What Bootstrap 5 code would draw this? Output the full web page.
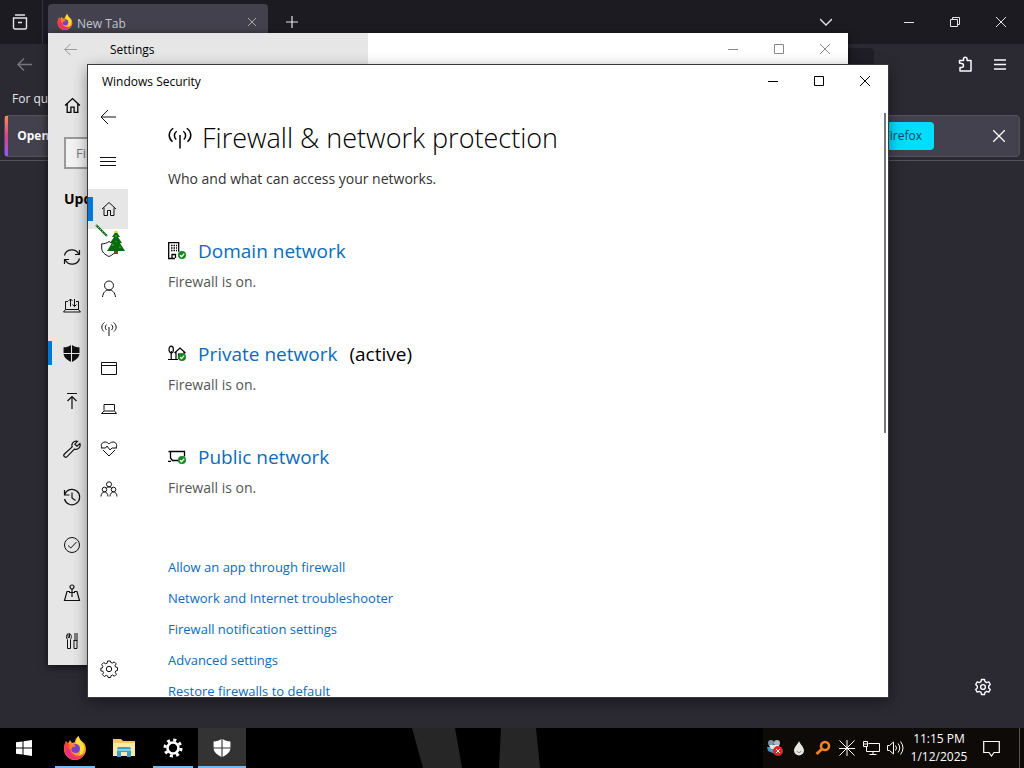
<!DOCTYPE html>
<html lang="en">
<head>
<meta charset="utf-8">
<meta name="viewport" content="width=device-width, initial-scale=1">
<title>Windows Security</title>
<link href="https://cdn.jsdelivr.net/npm/bootstrap@5.3.0/dist/css/bootstrap.min.css" rel="stylesheet">
<style>
:root{--ui:"Open Sans","Noto Sans",sans-serif;--accent:#0a6cbb;--bar:#0078d7}
body{font-family:var(--ui);font-size:12px;line-height:16px;background:#000;overflow:hidden}
svg{display:block;fill:none;stroke:currentColor;flex:none}
button{color:inherit;font:inherit}
.bare{border:0;background:none;padding:0;display:flex;align-items:center;justify-content:center;flex:none}
.cap{width:46px;height:32px}
.sq40{width:40px;height:40px}
.dim{color:#888}
/* browser */
.fx{background:#2b2a33;color:#fbfbfe}
.fx-tabs{height:44px;background:#1c1b22}
.fx-tabs,.fx-marks{color:#e4e4ea}
.fx-view{width:40px}
.fx-sep{width:1px;height:44px;background:#34333d;margin-left:2px}
.fx-tab{width:220px;margin:4px 0 0 5px;background:#42414d;border-radius:4px 4px 0 0;padding:0 12px 4px 9px;color:#c4c4cc}
.fx-tools{height:40px;padding:0 4px}
.fx-tools .off{color:#77767f}
.fx-url{height:32px;background:#1f1e26;border-radius:4px;margin:0 76px 0 60px}
.fx-ext{width:30px}
.fx-marks{height:30px;padding-left:12px}
.fx-note{height:42px;margin:1px 4px 3px;background:#42414d;border:1px solid #52515e;border-radius:4px}
.fx-strip{width:3px;background:linear-gradient(#ff8a50,#e0408c 50%,#9059ff)}
.fx-cta{background:#00ddff;color:#15465a;border:0;border-radius:4px;height:28px;padding:0 12px 0 40px;margin-right:45px}
.fx-page{border-top:1px solid #52515e}
/* windows */
.win{position:absolute}
.win-set{left:48px;top:33px;right:176px;bottom:103px;background:#fff;color:#000;box-shadow:0 2px 8px #000a}
.win-sec{left:88px;top:65px;right:136px;bottom:71px;background:#fff;color:#000;box-shadow:0 0 0 1px #3a3a3e,0 4px 14px #0007}
.set-head{height:32px}
.set-headl{width:320px;background:#e6e6e6}
.set-headl span{padding:2px 0 0 9px}
.set-pane{width:320px;background:#e6e6e6}
.set-home{height:48px;padding-left:16px;margin-top:16px;margin-bottom:8px}
.set-search{width:288px;height:32px;margin:0 16px;border:2px solid #999;background:#f2f2f2;padding:0 10px;font-size:13px;border-radius:0}
.set-search::placeholder{color:#777}
.set-title{font-size:14px;line-height:20px;font-weight:700;margin:20px 0 24px 16px}
.set-item{height:48px;padding-left:15px;display:flex;align-items:center;color:#111}
.mark-on{background:linear-gradient(var(--bar),var(--bar)) 0 50%/4px 24px no-repeat}
.sec-title{padding-left:14px;padding-top:2px}
.sec-nav{width:40px}
.sec-nav a,.sec-nav button{color:#111;width:40px;height:40px;display:flex;align-items:center;justify-content:center}
.sec-nav a{padding-left:2px}
.sec-nav .now{background:#e6e6e6;position:relative}
.now::before{content:"";position:absolute;left:0;top:8px;width:5px;height:24px;background:var(--bar)}
.sec-main{padding:23px 40px 0;overflow:hidden}
.sec-main h1{font-size:27px;line-height:36px;font-weight:300;margin:0;gap:10px}
.lede{font-size:14px;line-height:20px;color:#333;margin:13px 0 48px}
.net{margin-bottom:49px}
.net h2{font-size:19px;line-height:28px;font-weight:400;margin:0 0 7px}
.net p{font-size:14px;line-height:19px;color:#555;margin:0}
.sec-main a{color:var(--accent);text-decoration:none}
.links{font-size:13px;line-height:20px;padding-top:11px;gap:11px}
.thumb{width:2px;height:320px;background:#777;margin:16px 2px 0 0}
.pointer{position:absolute;left:94px;top:223px}
/* taskbar */
.tb{height:40px;background:#000;color:#fff}
.tb-start{width:48px;margin-right:3px}
.tb-apps{gap:1px}
.tb-app{width:48px}
.tb-app.run{position:relative}
.run::after{content:"";position:absolute;left:4px;right:4px;bottom:0;height:2px;background:#76b9ed}
.tb-app.top{background:#333}
.top::after{left:0;right:0}
.gap-l{flex:3}
.gap-r{flex:4}
.tb-tray{background:#0d0a08;padding-right:4px}
.tb-ic{width:24px}
.orange{color:#f5801f}
.tb-clock{width:64px;text-align:center;line-height:18px}
.tb-msg{width:40px}
.tb-end{border-right:1px solid #555;width:9px}
</style>
</head>
<body>
<svg width="0" height="0" class="position-absolute" aria-hidden="true">
<defs>
<symbol id="home" viewBox="0 0 16 16"><path d="M1 8 8 1.500 15 8M3 6.500V14.500h3.500V9.500h3v5H13V6.500"/></symbol>
<symbol id="cap-min" viewBox="0 0 10 10"><path d="M0 5.500h10"/></symbol>
<symbol id="cap-max" viewBox="0 0 10 10"><path d="M.5.5h9v9h-9z"/></symbol>
<symbol id="cross" viewBox="0 0 10 10"><path d="M0 0 10 10M10 0 0 10"/></symbol>
<symbol id="back" viewBox="0 0 16 16"><path d="M16 8H1M8 1 1 8l7 7"/></symbol>
<symbol id="waves" viewBox="0 0 16 16"><path d="M8 6v9M3.500 1.500C0 4 0 8 3 10.500M12.500 1.500c3.500 2.500 3.500 6.500.5 9M5.800 3.500c-2 1.500-2 4-.3 5.500M10.200 3.500c2 1.500 2 4 .3 5.500"/></symbol>
<symbol id="gear" viewBox="0 0 18 18"><path d="m7.600 1-.5 2.200-1.400.6-2-1.200-2 2L2.900 6.600l-.6 1.400L.8 8.300v2.500l2.200.5.600 1.300-1.200 2 1.900 1.900 2-1.200 1.300.6.5 1.600h2.500l.5-1.900 1.400-.6 2 1.200 1.900-1.900-1.200-2 .6-1.400 1.700-.5V7.600l-1.900-.5-.6-1.400 1.200-1.900-1.900-1.900-2 1.200-1.400-.6L10.300 1z"/><circle cx="9" cy="9" r="2.700"/></symbol>
<symbol id="tick" viewBox="0 0 8 8"><circle cx="4" cy="4" r="4" fill="#128a1c" stroke="none"/><path d="m2 4.200 1.500 1.500L6.200 2.700" stroke="#fff"/></symbol>
<symbol id="shield4" viewBox="0 0 16 16"><path fill="currentColor" stroke="none" d="M7.500 0v7.500H.5V2.200C3.500 2.200 5.500 1.500 7.500 0zM8.500 0v7.500h7V2.200c-3 0-5-.7-7-2.200zM.5 8.500h7V16C3.500 14 1 12 .5 8.500zM15.500 8.500h-7V16c4-2 6.500-4 7-7.500z"/></symbol>
<symbol id="firefox" viewBox="0 0 24 24"><g stroke="none"><path fill="#ff9a1f" d="M3 5l2 2.500 2-3.500 2 3 3-1c0-2 1-4 3.500-6l2 4.500C21 6 23 9 23 13c0 6-5 11-11 11S1 19 1 13c0-3 1-5 2-8z"/><path fill="#ffdf3b" d="M15.500 0c0 4 7.500 7 5.500 14-1 4-3 5-5 6 2-5 1-9-3-12-1-3 .5-6 2.500-8z"/><path fill="#f5404b" d="M1 12c0 7 5 12 11 12 5 0 8-3 10-7-5 5-13 3-14-3L6 8 3 6c-1 1-2 3-2 6z"/><path fill="#e82b80" d="M3 16c2 5 7 8 13 6-6 0-9-3-10-8L3 12z"/><circle cx="12.500" cy="12.500" r="4.500" fill="#7b3fd0"/><path fill="#ff7e28" d="M6 8c3-1 5 0 7 2l-4 1.500L8 14c-2-1-2-4-2-6z"/></g></symbol>
</defs>
</svg>

<div class="vh-100 d-flex flex-column position-relative">
 <main class="fx flex-grow-1 d-flex flex-column">
  <div class="fx-tabs d-flex">
   <button class="bare fx-view" aria-label="View"><svg width="16" height="16" viewBox="0 0 16 16" stroke-width="1.400"><path d="M3 1h10M1.500 4h13v9.500a1.500 1.500 0 0 1-1.500 1.500H3a1.500 1.500 0 0 1-1.500-1.500zM6 8.500h4"/></svg></button>
   <div class="fx-sep"></div>
   <div class="fx-tab d-flex align-items-center"><svg width="16" height="16"><use href="#firefox"/></svg><span class="flex-grow-1 ps-1 mt-1">New Tab</span><button class="bare" aria-label="Close tab"><svg width="8" height="8"><use href="#cross"/></svg></button></div>
   <button class="bare sq40 ms-1 mt-0" aria-label="New tab"><svg width="12" height="12" viewBox="0 0 12 12" class="mt-1"><path d="M6 0v12M0 6h12" stroke-width="1.200"/></svg></button>
   <button class="bare sq40 ms-auto me-4" aria-label="List tabs"><svg width="12" height="8" viewBox="0 0 12 8" stroke-width="1.300" class="mt-1"><path d="m0 1 6 6 6-6"/></svg></button>
   <div class="d-flex align-items-center ms-3"><button class="bare cap" aria-label="Minimize"><svg width="10" height="10"><use href="#cap-min"/></svg></button><button class="bare cap" aria-label="Restore"><svg width="10" height="10" viewBox="0 0 10 10"><path d="M.5 2.500h7v7h-7zM2.500 2.500v-2h7v7h-2"/></svg></button><button class="bare cap" aria-label="Close"><svg width="10" height="10"><use href="#cross"/></svg></button></div>
  </div>
  <div class="fx-tools d-flex align-items-center">
   <button class="bare sq40 off" aria-label="Back"><svg width="15" height="13" viewBox="0 0 15 13" stroke-width="1.400"><path d="M15 6.500H1M7 .5l-6 6 6 6"/></svg></button>
   <div class="fx-url flex-grow-1"></div>
   <button class="bare fx-ext" aria-label="Extensions"><svg width="16" height="16" viewBox="0 0 16 16" stroke-width="1.500" stroke-linejoin="round"><path d="M2.500 7V4.500h4V3a1.800 1.800 0 0 1 3.600 0v1.500H14V15H3v-3.500h1.500a1.900 1.900 0 0 0 0-4z"/></svg></button>
   <button class="bare sq40" aria-label="Menu"><svg width="12" height="11" viewBox="0 0 12 11" stroke-width="1.300"><path d="M0 1h12M0 5.500h12M0 10h12"/></svg></button>
  </div>
  <div class="fx-marks d-flex align-items-center">For quick access</div>
  <div class="fx-note d-flex align-items-center">
   <div class="fx-strip align-self-stretch"></div><b class="ps-2 ms-0 flex-grow-1">&#8202;Open previous tabs?</b>
   <button class="fx-cta">Firefox</button>
   <button class="bare sq40" aria-label="Dismiss"><svg width="12" height="12" viewBox="0 0 12 12" stroke-width="1.300"><path d="m0 0 12 12M12 0 0 12"/></svg></button>
  </div>
  <div class="fx-page flex-grow-1 d-flex align-items-end justify-content-end pb-4 pe-4">
   <button class="bare me-2 mb-2" aria-label="Customize"><svg width="18" height="18" viewBox="0 0 18 18" stroke-width="1.400" stroke-linejoin="round"><path d="m7.500 1.500-.5 2.200-1.600.9-2.200-.7-1.500 2.600L3.300 8v2l-1.600 1.500 1.500 2.600 2.200-.7 1.600.9.500 2.200h3l.5-2.200 1.600-.9 2.200.7 1.500-2.600L14.700 10V8l1.600-1.500-1.500-2.600-2.200.7-1.600-.9-.5-2.200z"/><circle cx="9" cy="9" r="2.400"/></svg></button>
  </div>
 </main>

 <section class="win win-set d-flex flex-column" aria-label="Settings">
  <header class="set-head d-flex align-items-center">
   <div class="set-headl h-100 d-flex align-items-center"><button class="bare dim ms-3 me-4" aria-label="Back"><svg width="13" height="13"><use href="#back"/></svg></button><span>Settings</span></div>
   <div class="d-flex ms-auto dim"><button class="bare cap" aria-label="Minimize"><svg width="10" height="10"><use href="#cap-min"/></svg></button><button class="bare cap" aria-label="Maximize"><svg width="10" height="10"><use href="#cap-max"/></svg></button><button class="bare cap" aria-label="Close"><svg width="10" height="10"><use href="#cross"/></svg></button></div>
  </header>
  <nav class="set-pane flex-grow-1 overflow-hidden">
   <a class="set-home d-flex align-items-center text-black" href="#" aria-label="Home"><svg width="17" height="17" stroke-width="1.200"><use href="#home"/></svg></a>
   <input class="set-search d-block" type="search" placeholder="Find a setting" aria-label="Find a setting">
   <div class="set-title">Update &amp; Security</div>
   <a class="set-item" href="#" aria-label="Windows Update"><svg width="18" height="16" viewBox="0 0 18 16" stroke-width="1.200"><path d="M1.500 6.500C3-.5 13-1 16 5.500M16.500 1v4.500H12M16.500 9.500c-1.500 7-11.500 7.500-14.500 1M1.500 15v-4.500H6"/></svg></a>
   <a class="set-item" href="#" aria-label="Delivery Optimization"><svg width="18" height="16" viewBox="0 0 18 16"><path d="M5 4.500H2.500v8h13v-8H13M.5 15h17l-2-2.500h-13zM7.500 9.500V2M5.500 4l2-2 2 2M11.500 2v7.500M9.500 7.500l2 2 2-2"/></svg></a>
   <a class="set-item mark-on" href="#" aria-label="Windows Security"><svg width="17" height="17"><use href="#shield4"/></svg></a>
   <a class="set-item" href="#" aria-label="Backup"><svg width="18" height="18" viewBox="0 0 18 18" stroke-width="1.200"><path d="M4 1.500h10M9 17V5M4.500 9 9 4.500 13.500 9"/></svg></a>
   <a class="set-item" href="#" aria-label="Troubleshoot"><svg width="18" height="18" viewBox="0 0 18 18" stroke-width="1.200"><path d="M14.500 1.300a4.300 4.300 0 0 0-5.300 5.600L1.400 14a1.900 1.900 0 0 0 2.700 2.700l7.300-7.600a4.300 4.300 0 0 0 5.500-5.500L14 6.300 11.800 4.200z"/></svg></a>
   <a class="set-item" href="#" aria-label="Recovery"><svg width="18" height="18" viewBox="0 0 18 18" stroke-width="1.200"><path d="M1.500 2v5h5M1.700 6.500A7.700 7.700 0 1 1 1.500 11M9 4.500V10l3.500 2.500"/></svg></a>
   <a class="set-item" href="#" aria-label="Activation"><svg width="18" height="18" viewBox="0 0 18 18"><circle cx="9" cy="9" r="7.500"/><path d="m5 9.500 2.800 2.500L13.500 6"/></svg></a>
   <a class="set-item" href="#" aria-label="Find my device"><svg width="18" height="18" viewBox="0 0 18 18" stroke-width="1.200"><circle cx="9" cy="3" r="2"/><path d="M9 5v8M7 7.500H4L1.500 16.500h15L14 7.500h-3M6 8.500h6"/></svg></a>
   <a class="set-item" href="#" aria-label="For developers"><svg width="18" height="18" viewBox="0 0 18 18"><path d="M5 1.500v4h1.500v-4C9 3 8.500 6 7.500 7.500v9h-3v-9C3 6 3 3 5 1.500M12 1v7M10.500 8.500h4M11 8.500v8h3v-8M14 1v7"/></svg></a>
  </nav>
 </section>

 <section class="win win-sec d-flex flex-column" aria-label="Windows Security">
  <header class="d-flex align-items-center"><span class="sec-title flex-grow-1">Windows Security</span><button class="bare cap" aria-label="Minimize"><svg width="10" height="10"><use href="#cap-min"/></svg></button><button class="bare cap" aria-label="Maximize"><svg width="10" height="10"><use href="#cap-max"/></svg></button><button class="bare cap" aria-label="Close"><svg width="10" height="10"><use href="#cross"/></svg></button></header>
  <div class="d-flex flex-grow-1 overflow-hidden">
   <nav class="sec-nav d-flex flex-column flex-shrink-0">
    <button class="bare" aria-label="Back"><svg width="16" height="16"><use href="#back"/></svg></button>
    <button class="bare mt-1 mb-2" aria-label="Menu"><svg width="16" height="16" viewBox="0 0 16 16"><path d="M0 4.500h16M0 8.500h16M0 12.500h16"/></svg></button>
    <a class="now" href="#" aria-label="Home"><svg width="16" height="16"><use href="#home"/></svg></a>
    <a href="#" aria-label="Virus protection"><svg width="16" height="16" viewBox="0 0 16 16"><path d="M8 .5C6 2.200 3.500 2.800.7 2.800V7c0 4 3 6.500 7.300 8.500 4.300-2 7.300-4.500 7.300-8.500V2.800C12.500 2.800 10 2.200 8 .5z"/></svg></a>
    <a href="#" aria-label="Account protection"><svg width="16" height="18" viewBox="0 0 16 18"><circle cx="8" cy="5.500" r="4.500"/><path d="M1.500 17c.5-4.500 3-7 6.500-7s6 2.500 6.500 7"/></svg></a>
    <a href="#" aria-label="Firewall"><svg width="16" height="16"><use href="#waves"/></svg></a>
    <a href="#" aria-label="App control"><svg width="16" height="14" viewBox="0 0 16 14"><path d="M.5.5h15v12H.5zM.5 3.500h15"/></svg></a>
    <a href="#" aria-label="Device security"><svg width="16" height="12" viewBox="0 0 16 12"><path d="M3 7.500v-6h10.500v6M3 8h10.500l2 2.500H.5z"/></svg></a>
    <a href="#" aria-label="Device health"><svg width="18" height="16" viewBox="0 0 18 16"><path d="M2 7C.2 4 2 1 5 1c2 0 3 1 4 2 1-1 2-2 4-2 3 0 4.800 3 3 6M3 9l6 6 6-6M1 7h4.500L7 5l3 4 2-2h5"/></svg></a>
    <a href="#" aria-label="Family options"><svg width="18" height="17" viewBox="0 0 18 17"><circle cx="9" cy="3.300" r="2.500"/><circle cx="4.500" cy="8.500" r="2.300"/><circle cx="13.500" cy="8.500" r="2.300"/><path d="M1 15.500c0-6 7-6 7 0M10 15.500c0-6 7-6 7 0M6 7.500C7 5.500 11 5.500 12 7.500"/></svg></a>
    <a href="#" class="mt-auto mb-2" aria-label="Settings"><svg width="18" height="18"><use href="#gear"/></svg></a>
   </nav>
   <div class="sec-main flex-grow-1">
    <h1 class="d-flex align-items-center"><svg width="24" height="24"><use href="#waves"/></svg><span>Firewall &amp; network protection</span></h1>
    <p class="lede">Who and what can access your networks.</p>
    <div class="net"><h2 class="d-flex align-items-center"><svg width="18" height="18" viewBox="0 0 18 18" stroke-width="1.300" class="me-2"><path d="M7 16.500H.7V.7h10v9M4 16v-3.500h3.500V16"/><path d="M3 3.500h6M3 6h6M3 8.500h6" stroke-dasharray="1.500 1"/><use href="#tick" x="10" y="9" width="8" height="8"/></svg><a class="ms-1" href="#">Domain network</a></h2><p>Firewall is on.</p></div>
    <div class="net"><h2 class="d-flex align-items-center"><svg width="18" height="18" viewBox="0 0 18 18" stroke-width="1.200" class="me-2"><ellipse cx="3.200" cy="4.500" rx="2.200" ry="3.300"/><path d="M3.200 6v8.500M0 14.500h10M6.500 8l5.500-5 5.500 5M8 7v7.500M16 7v3"/><path d="M10.500 14V9h2.500"/><use href="#tick" x="10" y="8" width="8" height="8"/></svg><a class="ms-1" href="#">Private network</a><span class="ms-2 ps-1">(active)</span></h2><p>Firewall is on.</p></div>
    <div class="net"><h2 class="d-flex align-items-center"><svg width="18" height="18" viewBox="0 0 18 18" stroke-width="1.300" class="me-2"><path d="M.5 3.500h16v5M2.500 4v6l2 2.500h6M0 13.300h3"/><use href="#tick" x="10" y="8" width="8" height="8"/></svg><a class="ms-1" href="#">Public network</a></h2><p>Firewall is on.</p></div>
    <div class="links d-flex flex-column align-items-start"><a href="#">Allow an app through firewall</a><a href="#">Network and Internet troubleshooter</a><a href="#">Firewall notification settings</a><a href="#">Advanced settings</a><a href="#">Restore firewalls to default</a></div>
   </div>
   <div class="thumb flex-shrink-0"></div>
  </div>
 </section>

 <svg class="pointer" width="34" height="34" viewBox="0 0 34 34"><path d="m2 2 11 11" stroke="#0b6b12" stroke-width="2"/><path d="m2 2 11 11" stroke="#9fd89f" stroke-width="1" stroke-dasharray="1 2"/><g stroke="none"><path fill="#7a4a1c" d="M20 27h4v4h-4z"/><path fill="#0a6a10" d="m22 8 4 6h-2l4 6h-2l5 8H13l5-8h-2l4-6h-2z"/><path fill="#1f9a2a" d="M21 12h2v2h-2zM18 21h2v2h-2zM25 23h2v2h-2zM21 18h2v1h-2z"/><path fill="#d8d33a" d="m22 7 1 1.500h1.500L23.500 10h-3l-1-1.500H21z"/></g></svg>

 <footer class="tb d-flex flex-shrink-0">
  <button class="bare tb-start" aria-label="Start"><svg width="16" height="16" viewBox="0 0 16 16"><path fill="#fff" stroke="none" d="M0 2.300 6.500 1.400v6.100H0zM7.500 1.200 16 0v7.500H7.500zM0 8.500h6.500v6.100L0 13.700zM7.500 8.500H16V16l-8.500-1.200z"/></svg></button>
  <div class="d-flex tb-apps">
   <button class="bare tb-app run" aria-label="Firefox"><svg width="24" height="24"><use href="#firefox"/></svg></button>
   <button class="bare tb-app" aria-label="File Explorer"><svg width="22" height="20" viewBox="0 0 22 20"><g stroke="none"><path fill="#f3c95c" d="M0 1h8l2 2h12v15H0z"/><path fill="#ffe9a6" d="M0 5h22v13H0z"/><path fill="#3aa0d0" d="M4 11q0-2 2-2h10q2 0 2 2v8h-4v-5H8v5H4z"/><path fill="#7fd0e8" d="M4 11h14v2H4z"/></g></svg></button>
   <button class="bare tb-app run" aria-label="Settings"><svg width="20" height="20" viewBox="0 0 20 20"><circle cx="10" cy="10" r="5.500" stroke-width="2.600"/><circle cx="10" cy="10" r="8" stroke-width="3" stroke-dasharray="3 3.283"/></svg></button>
   <button class="bare tb-app run top" aria-label="Windows Security"><svg width="18" height="18"><use href="#shield4"/></svg></button>
  </div>
  <div class="gap-l"></div>
  <svg width="130" height="40" viewBox="0 0 130 40"><path fill="#262626" stroke="none" d="M0 0h43l7 40H11zM89 0h35l4 40H87z"/></svg>
  <div class="gap-r"></div>
  <div class="tb-tray d-flex">
   <button class="bare tb-ic" aria-label="Tray application"><svg width="16" height="16" viewBox="0 0 16 16"><g stroke="none"><circle cx="4" cy="3" r="3" fill="#7d97a8"/><circle cx="10" cy="3" r="3" fill="#a8bac4"/><path fill="#3f9dc4" d="M0 7h8v7L1 11z"/><path fill="#dfe9ec" d="M2 5h10v4H4z"/><circle cx="11" cy="11" r="5" fill="#d52b25"/></g><path d="m9 9 4 4M13 9l-4 4" stroke="#fff"/></svg></button>
   <button class="bare tb-ic" aria-label="Drop"><svg width="12" height="16" viewBox="0 0 12 16"><path fill="#e6e6e0" stroke="none" d="M6 1c1 3 5 6 5 9.500a5 5 0 0 1-10 0C1 7 5 4 6 1z"/><path d="M4 11c1 2 3 2 4 0" stroke="#777"/></svg></button>
   <button class="bare tb-ic orange" aria-label="Search"><svg width="16" height="16" viewBox="0 0 16 16"><circle cx="10" cy="6" r="4" stroke-width="2.600"/><path d="m7 9-5.500 5" stroke-width="3"/></svg></button>
   <button class="bare tb-ic" aria-label="Star"><svg width="16" height="16" viewBox="0 0 16 16"><path d="m.5.5 15 15M15.500.5l-15 15M8 0v16M0 8.500h16"/></svg></button>
   <button class="bare tb-ic" aria-label="Network"><svg width="17" height="16" viewBox="0 0 17 16"><path d="M5.500 3.500h11v8H3.500v-5M.5 1.500h4v5h-4zM.5 4h4M10 11.500v3M6.500 14.500h7"/></svg></button>
   <button class="bare tb-ic" aria-label="Volume"><svg width="17" height="16" viewBox="0 0 17 16"><path d="M.5 5.500h2L6.500 2v12L2.500 10.500h-2zM8.500 5.500q2 2.500 0 5M11 3.500q3.500 4.500 0 9M13.500 1.500q5 6.500 0 13"/></svg></button>
   <button class="bare tb-clock"><span>11:15 PM<br>1/12/2025</span></button>
   <button class="bare tb-msg" aria-label="Notifications"><svg width="17" height="17" viewBox="0 0 17 17" stroke-width="1.200"><path d="M.7 1.500h15.600v11H11L8.500 16 6 12.500H.7z"/></svg></button>
   <div class="tb-end"></div>
  </div>
 </footer>
</div>
<script src="https://cdn.jsdelivr.net/npm/bootstrap@5.3.0/dist/js/bootstrap.bundle.min.js"></script>
</body>
</html>
